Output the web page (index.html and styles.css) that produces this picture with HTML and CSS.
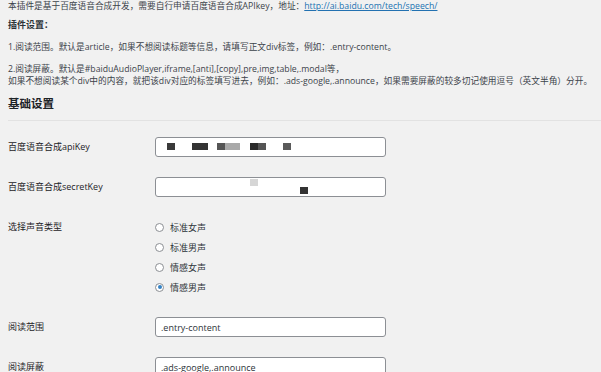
FILE: index.html
```html
<!DOCTYPE html>
<html lang="zh-CN">
<head>
    <meta charset="UTF-8">
    <title>百度语音设置</title>
    <link rel="stylesheet" href="styles.css">
</head>
<body>

<div class="wrap">
    <!-- 插件说明 -->
    <p class="note">本插件是基于百度语音合成开发，需要自行申请百度语音合成APIkey，地址：<a href="#">http://ai.baidu.com/tech/speech/</a></p>
    <h3 class="sub">插件设置：</h3>
    <p class="note gap">1.阅读范围。默认是article，如果不想阅读标题等信息，请填写正文div标签，例如：.entry-content。</p>
    <p class="note gap">2.阅读屏蔽。默认是#baiduAudioPlayer,iframe,[anti],[copy],pre,img,table,.modal等，<br>如果不想阅读某个div中的内容，就把该div对应的标签填写进去，例如：.ads-google,.announce，如果需要屏蔽的较多切记使用逗号（英文半角）分开。</p>

    <h2 class="section">基础设置</h2>
    <hr class="divider">

    <!-- 设置表单 -->
    <div class="form">
        <div class="row">
            <label class="label" for="apiKey">百度语音合成apiKey</label>
            <div class="field">
                <input type="text" id="apiKey" class="text" value="">
                <span class="blur" style="left:12px;top:6px;width:8px;background:#3a3a3a"></span>
                <span class="blur" style="left:37px;top:6px;width:16px;background:#333"></span>
                <span class="blur" style="left:62px;top:6px;width:8px;background:#555"></span>
                <span class="blur" style="left:70px;top:6px;width:15px;background:#a9a9a9"></span>
                <span class="blur" style="left:95px;top:6px;width:8px;background:#2b2b2b"></span>
                <span class="blur" style="left:103px;top:6px;width:8px;background:#555"></span>
                <span class="blur" style="left:128px;top:6px;width:8px;background:#5a5a5a"></span>
            </div>
        </div>
        <div class="row">
            <label class="label" for="secretKey">百度语音合成secretKey</label>
            <div class="field">
                <input type="text" id="secretKey" class="text" value="">
                <span class="blur" style="left:95px;top:2px;width:8px;background:#d6d6d6"></span>
                <span class="blur" style="left:145px;top:10px;width:8px;background:#333"></span>
            </div>
        </div>
        <div class="row">
            <span class="label">选择声音类型</span>
            <div class="radios">
                <label class="choice"><input type="radio" name="voice" class="radio">标准女声</label>
                <label class="choice"><input type="radio" name="voice" class="radio">标准男声</label>
                <label class="choice"><input type="radio" name="voice" class="radio">情感女声</label>
                <label class="choice"><input type="radio" name="voice" class="radio" checked>情感男声</label>
            </div>
        </div>
        <div class="row">
            <label class="label" for="readArea">阅读范围</label>
            <div class="field">
                <input type="text" id="readArea" class="text" value=".entry-content">
            </div>
        </div>
        <div class="row">
            <label class="label" for="readBlock">阅读屏蔽</label>
            <div class="field">
                <input type="text" id="readBlock" class="text" value=".ads-google,.announce">
            </div>
        </div>
    </div>
</div>

</body>
</html>
```

FILE: styles.css
```css
body {
    margin: 0;
    background-color: #f1f1f1;
    color: #3c434a;
    font-family: "Open Sans", "Noto Sans CJK SC", sans-serif;
    font-size: 9px;
    overflow: hidden;
}

.wrap {
    padding: 0 8px;
}

.note {
    margin: 0;
    font-size: 8.7px;
    line-height: 12px;
    white-space: nowrap;
}

.note.gap {
    margin-top: 10px;
}

.note a {
    color: #2271b1;
}

.sub {
    margin: 7px 0 0;
    font-size: 9px;
    line-height: 12px;
    color: #2c3338;
}

.section {
    margin: 9px 0 0;
    font-size: 11.5px;
    line-height: 16px;
    color: #1d2327;
}

.divider {
    margin: 8px -8px 0 0;
    border: 0;
    border-top: 1px solid #e2e2e2;
}

.form {
    margin-top: 6px;
}

.row {
    display: grid;
    grid-template-columns: 147px 231px;
    padding: 10px 0;
}

.label {
    line-height: 20px;
    color: #1d2327;
}

.field {
    position: relative;
    height: 20px;
}

.text {
    box-sizing: border-box;
    width: 100%;
    height: 20px;
    margin: 0;
    padding: 0 5px;
    border: 1px solid #8c8f94;
    border-radius: 3px;
    background-color: #fff;
    color: #2c3338;
    font-family: inherit;
    font-size: 9px;
}

.blur {
    position: absolute;
    height: 7px;
}

.radios {
    display: flex;
    flex-direction: column;
}

.choice {
    display: flex;
    align-items: center;
    gap: 6px;
    height: 20px;
    color: #2c3338;
}

.radio {
    appearance: none;
    box-sizing: border-box;
    width: 9px;
    height: 9px;
    margin: 0;
    border: 1px solid #8c8f94;
    border-radius: 50%;
    background-color: #fff;
    position: relative;
}

.radio:checked::before {
    content: "";
    position: absolute;
    left: 1.5px;
    top: 1.5px;
    width: 4px;
    height: 4px;
    border-radius: 50%;
    background-color: #3582c4;
}
```
